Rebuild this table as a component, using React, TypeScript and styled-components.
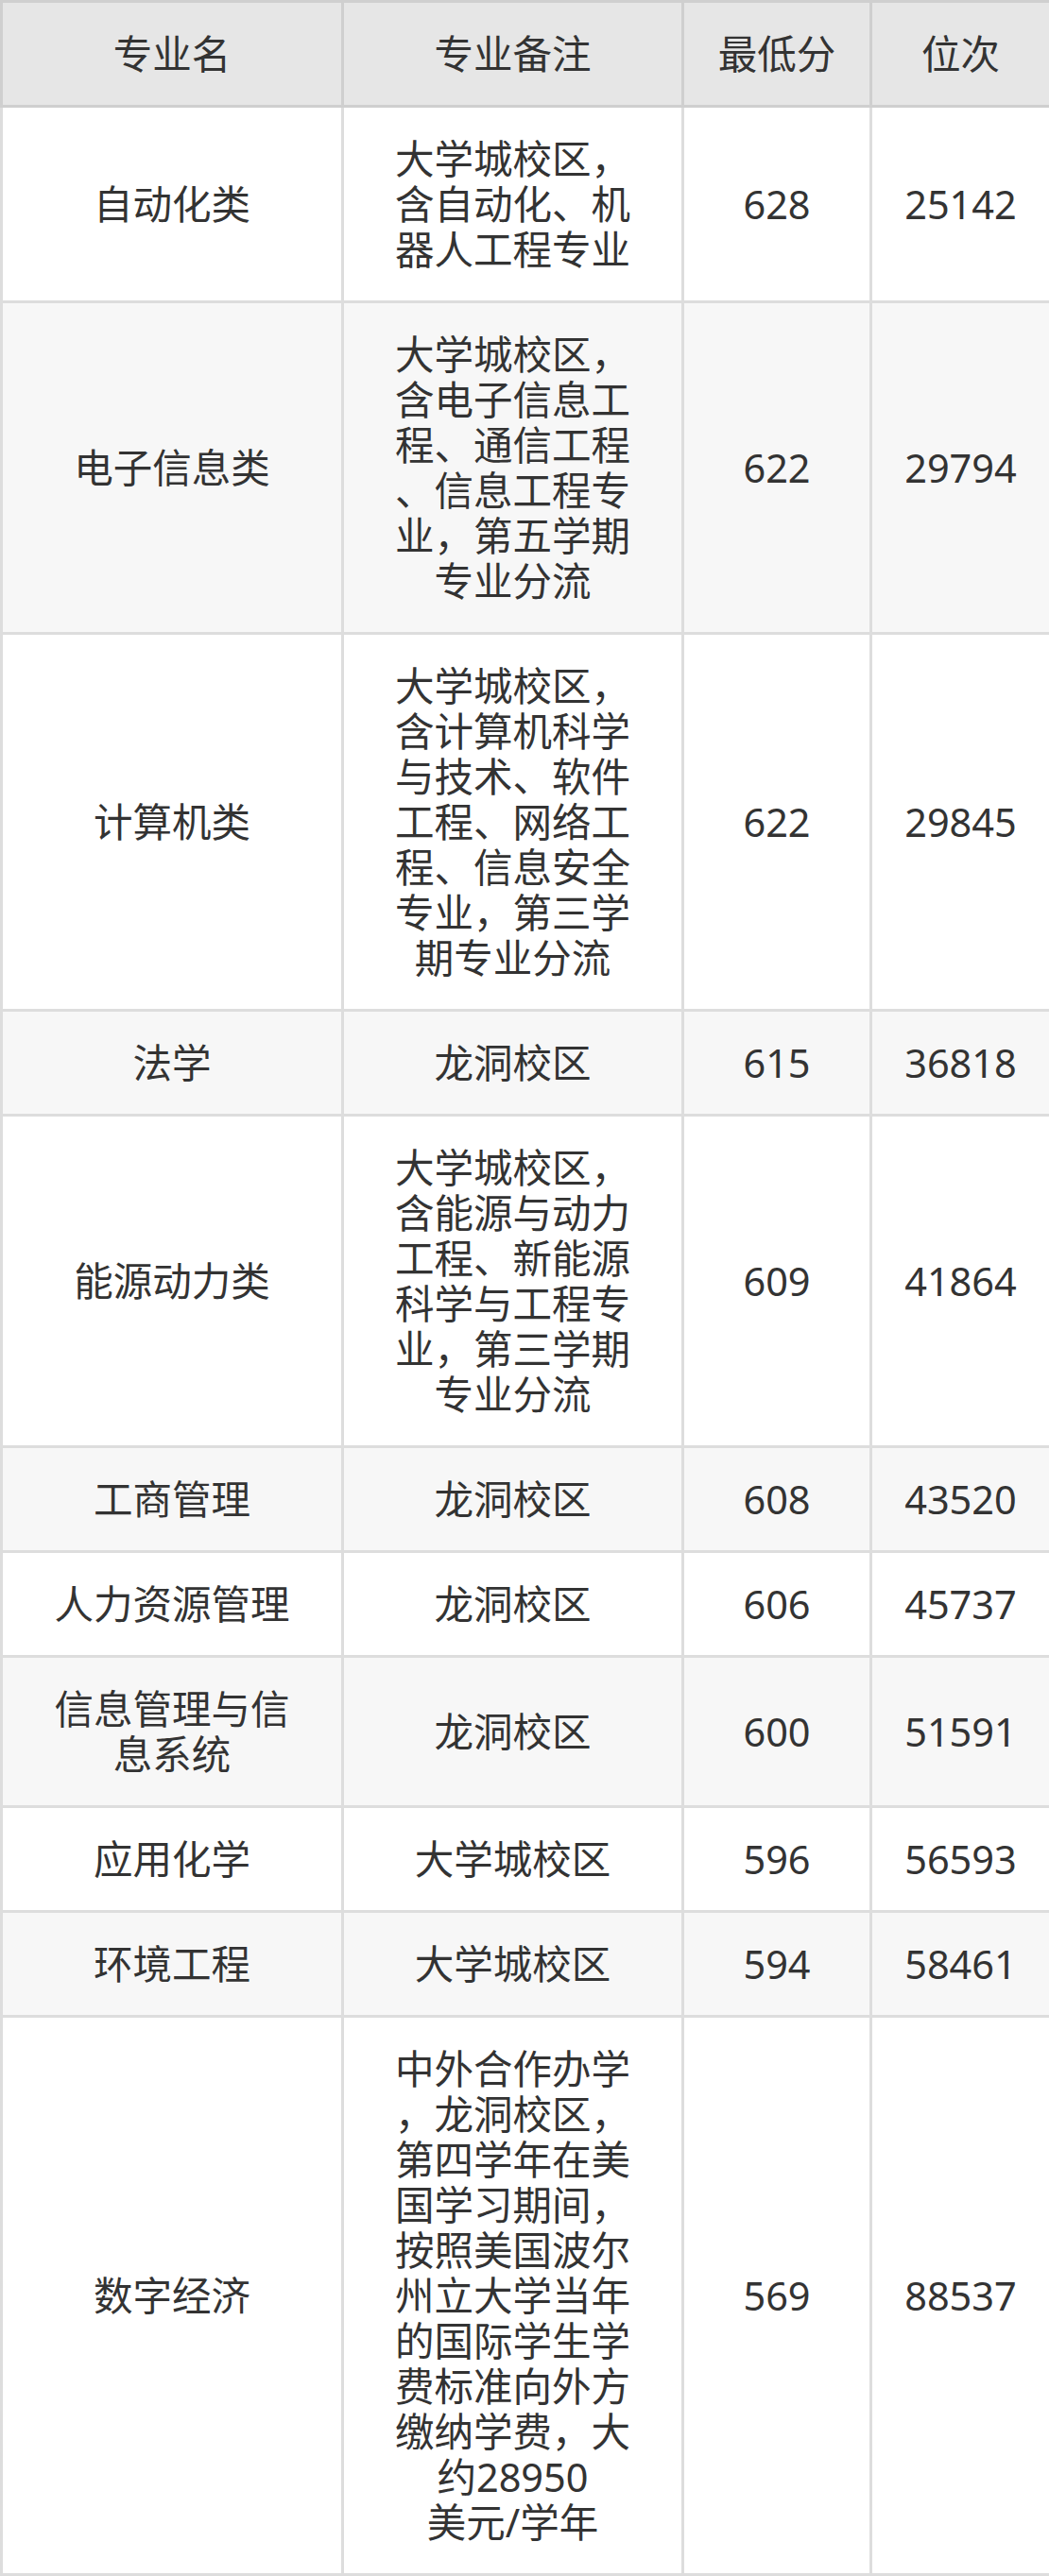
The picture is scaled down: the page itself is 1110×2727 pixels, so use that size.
import React from 'react';
import styled, { createGlobalStyle } from 'styled-components';

const GlobalStyle = createGlobalStyle`
  html, body {
    margin: 0;
    padding: 0;
    background: #ffffff;
  }
  body {
    font-family: "Noto Sans", "Noto Sans CJK SC", sans-serif;
    color: #333333;
  }
`;

const Table = styled.table`
  width: 1110px;
  table-layout: fixed;
  border-collapse: collapse;
  font-size: 41.5px;
  line-height: 48px;
`;

const HeadCell = styled.th`
  background: #e6e6e6;
  border: 3px solid #cfcfcf;
  padding: 30px 16px;
  font-weight: 400;
  text-align: center;
  vertical-align: middle;
`;

const Row = styled.tr<{ $striped: boolean }>`
  background: ${(p) => (p.$striped ? '#f7f7f7' : '#ffffff')};
`;

const Cell = styled.td`
  border: 3px solid #dddddd;
  padding: 30px 16px;
  text-align: center;
  vertical-align: middle;
`;

type Major = {
  name: string[];
  note: string[];
  score: string;
  rank: string;
};

const majors: Major[] = [
  { name: ['自动化类'], note: ['大学城校区，', '含自动化、机', '器人工程专业'], score: '628', rank: '25142' },
  {
    name: ['电子信息类'],
    note: ['大学城校区，', '含电子信息工', '程、通信工程', '、信息工程专', '业，第五学期', '专业分流'],
    score: '622',
    rank: '29794',
  },
  {
    name: ['计算机类'],
    note: ['大学城校区，', '含计算机科学', '与技术、软件', '工程、网络工', '程、信息安全', '专业，第三学', '期专业分流'],
    score: '622',
    rank: '29845',
  },
  { name: ['法学'], note: ['龙洞校区'], score: '615', rank: '36818' },
  {
    name: ['能源动力类'],
    note: ['大学城校区，', '含能源与动力', '工程、新能源', '科学与工程专', '业，第三学期', '专业分流'],
    score: '609',
    rank: '41864',
  },
  { name: ['工商管理'], note: ['龙洞校区'], score: '608', rank: '43520' },
  { name: ['人力资源管理'], note: ['龙洞校区'], score: '606', rank: '45737' },
  { name: ['信息管理与信', '息系统'], note: ['龙洞校区'], score: '600', rank: '51591' },
  { name: ['应用化学'], note: ['大学城校区'], score: '596', rank: '56593' },
  { name: ['环境工程'], note: ['大学城校区'], score: '594', rank: '58461' },
  {
    name: ['数字经济'],
    note: [
      '中外合作办学',
      '，龙洞校区，',
      '第四学年在美',
      '国学习期间，',
      '按照美国波尔',
      '州立大学当年',
      '的国际学生学',
      '费标准向外方',
      '缴纳学费，大',
      '约28950',
      '美元/学年',
    ],
    score: '569',
    rank: '88537',
  },
];

function Lines({ lines }: { lines: string[] }) {
  return (
    <>
      {lines.map((l, i) => (
        <React.Fragment key={i}>
          {i > 0 && <br />}
          {l}
        </React.Fragment>
      ))}
    </>
  );
}

export default function App() {
  return (
    <>
      <GlobalStyle />
      <Table>
        <colgroup>
          <col style={{ width: 361 }} />
          <col style={{ width: 360 }} />
          <col style={{ width: 199 }} />
          <col style={{ width: 190 }} />
        </colgroup>
        <thead>
          <tr>
            <HeadCell>专业名</HeadCell>
            <HeadCell>专业备注</HeadCell>
            <HeadCell>最低分</HeadCell>
            <HeadCell>位次</HeadCell>
          </tr>
        </thead>
        <tbody>
          {majors.map((m, i) => (
            <Row key={m.rank} $striped={i % 2 === 1}>
              <Cell>
                <Lines lines={m.name} />
              </Cell>
              <Cell>
                <Lines lines={m.note} />
              </Cell>
              <Cell>{m.score}</Cell>
              <Cell>{m.rank}</Cell>
            </Row>
          ))}
        </tbody>
      </Table>
    </>
  );
}
